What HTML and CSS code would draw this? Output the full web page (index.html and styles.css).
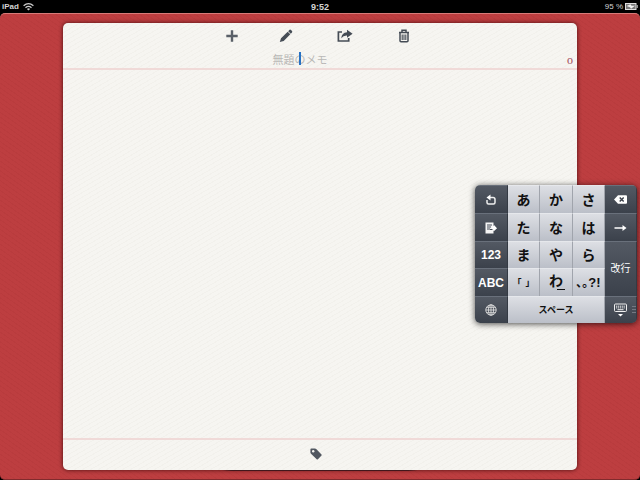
FILE: index.html
```html
<!DOCTYPE html>
<html lang="ja">
<head>
<meta charset="utf-8">
<meta name="viewport" content="width=device-width, initial-scale=1">
<title>無題のメモ</title>
<link rel="stylesheet" href="styles.css">
</head>
<body>
<header class="status">
  <div class="status-left">
    <span>iPad</span>
    <svg width="11" height="8" viewBox="0 0 11 8" fill="none" stroke="#ccc" stroke-width="1.3" aria-hidden="true"><path d="M.6 2.8Q5.5-1.4 10.4 2.8M2.5 4.7Q5.500 2.100 8.500 4.700"/><path d="M3.900 5.900 5.500 7.600 7.100 5.900Q5.500 4.700 3.900 5.900Z" fill="#ccc" stroke="none"/></svg>
  </div>
  <time>9:52</time>
  <div class="status-right">
    <span class="percent">95 %</span>
    <svg width="13" height="7" viewBox="0 0 13 7" aria-hidden="true"><rect x=".5" y=".5" width="10.500" height="6" fill="#777" stroke="#ddd"/><path d="M11.700 2h1v3h-1z" fill="#ccc"/><path d="M1.500 3 5.500 1.200 6.500 2.700H10L6 5.800 5 4.200z" fill="#eee"/></svg>
  </div>
</header>
<main class="desk">
  <article class="paper">
    <nav class="tools" aria-label="メモ">
      <button class="tool tool-first" aria-label="追加"><svg width="12" height="12" viewBox="0 0 12 12"><path d="M6 .3v11.400M.3 6h11.400" stroke="#5a6068" stroke-width="2.400"/></svg></button>
      <button class="tool" aria-label="編集"><svg width="14" height="14" viewBox="0 0 14 14" fill="#454c55"><path d="M.8 13 2 9.200 8.700 2.700 11.300 5.300 4.700 11.900ZM9.200 2.200 10.600.8Q11.300.4 12 .9L13 1.900Q13.600 2.600 13 3.400L11.800 4.800Z"/></svg></button>
      <button class="tool tool-wide" aria-label="共有"><svg width="16" height="14" viewBox="0 0 16 14"><path d="M5 3H1.400V12H11.700V9" fill="none" stroke="#454c55" stroke-width="1.700"/><path d="M10 .8 15.600 4.700 10 8.700V6.500Q6.300 6.300 4.200 9.200 4.800 3.700 10 3.200Z" fill="#454c55"/></svg></button>
      <button class="tool" aria-label="削除"><svg width="12" height="14" viewBox="0 0 12 14" fill="none" stroke="#454c55"><path d="M1 3.500h10M4 3V1.200h4V3" stroke-width="1.500"/><path d="M2 4V11.800Q2 12.800 3 12.800H9Q10 12.800 10 11.800V4" stroke-width="1.500"/><path d="M4.200 5.500V11M6 5.500V11M7.800 5.500V11" stroke-width="1.100"/></svg></button>
    </nav>
    <div class="title-row">
      <div class="title-field">
        <input class="title" type="text" aria-label="タイトル" placeholder="無題のメモ">
        <span class="caret"></span>
      </div>
      <span class="count">o</span>
    </div>
    <textarea class="note" aria-label="本文"></textarea>
    <footer class="tags">
      <button class="tag" aria-label="タグ"><svg width="12" height="12" viewBox="0 0 12 12"><path d="M.4 1.400Q.4.400 1.400.400L5 .5Q5.700.5 6.200 1L11.500 6.500Q12 7.100 11.500 7.600L7.900 11.300Q7.300 11.800 6.700 11.300L1 5.700Q.4 5.200.4 4.600Z" fill="#515760"/><circle cx="3.200" cy="3.200" r="1.200" fill="#f5f4f0"/></svg></button>
    </footer>
  </article>
</main>
<section class="keyboard" aria-label="キーボード">
  <button class="key dark" aria-label="戻す"><svg width="12" height="12" viewBox="0 0 12 12"><path d="M2 6V8.500Q2 10 3.500 10H8.500Q10 10 10 8.500V5.500Q10 3.500 8 3.500H5" fill="none" stroke="#eee" stroke-width="1.500"/><path d="M5.500.5V6.500L1.500 3.500Z" fill="#fff"/></svg></button>
  <button class="key">あ</button>
  <button class="key">か</button>
  <button class="key">さ</button>
  <button class="key dark" aria-label="削除"><svg width="13" height="9" viewBox="0 0 13 9"><path d="M0 4.500 4 .3H12Q13 .3 13 1.300V7.700Q13 8.700 12 8.700H4Z" fill="#fff"/><path d="m5.700 2.500 4 4m0-4-4 4" stroke="#3b414b" stroke-width="1.500"/></svg></button>
  <button class="key dark" aria-label="次候補"><svg width="12" height="12" viewBox="0 0 12 12"><path d="M.5.500h8v3l3 2.700L8.500 9v2.500h-8z" fill="#f5f5f5"/><path d="M2 3h5M2 5h4M2 7h3M5 7.500h3" stroke="#434954"/><path d="M7 4.500h2V3l3 3.200L9 9V7.500H7z" fill="#fff"/></svg></button>
  <button class="key">た</button>
  <button class="key">な</button>
  <button class="key">は</button>
  <button class="key dark" aria-label="次へ"><svg width="13" height="8" viewBox="0 0 13 8"><path d="M.5 4H10" stroke="#fff" stroke-width="1.500"/><path d="M8.500 1 12.500 4 8.500 7Z" fill="#fff"/></svg></button>
  <button class="key dark latin">123</button>
  <button class="key">ま</button>
  <button class="key">や</button>
  <button class="key">ら</button>
  <button class="key dark enter">改行</button>
  <button class="key dark latin">ABC</button>
  <button class="key brackets"><span>「</span><span>」</span></button>
  <button class="key wa">わ<span class="bar"></span></button>
  <button class="key marks"><span class="dots">､｡</span>?!</button>
  <button class="key dark" aria-label="言語"><svg width="12" height="12" viewBox="0 0 12 12" fill="none" stroke="#ddd" stroke-width=".9"><circle cx="6" cy="6" r="5.200"/><ellipse cx="6" cy="6" rx="2.500" ry="5.200"/><path d="M6 .8V11.200M.8 6H11.200M1.700 3.300H10.300M1.700 8.700H10.300"/></svg></button>
  <button class="key space">スペース</button>
  <button class="key dark" aria-label="閉じる"><svg width="13" height="14" viewBox="0 0 13 14"><rect x=".5" y="1" width="12" height="7.500" rx="1" fill="none" stroke="#eee"/><path d="M2 3.200h9M2 4.900h9" stroke="#eee" stroke-dasharray="1.200 .7"/><path d="M3.500 6.700h6" stroke="#eee"/><path d="M4 11h5L6.500 13.500Z" fill="#fff"/></svg><span class="grip"></span></button>
</section>
</body>
</html>
```
FILE: styles.css
```css
* {
  box-sizing: border-box;
}

body {
  margin: 0;
  min-height: 100vh;
  display: flex;
  flex-direction: column;
  background: #000;
  font-family: "Liberation Sans", "Noto Sans CJK JP", sans-serif;
}

button,
input,
textarea {
  margin: 0;
  padding: 0;
  border: 0;
  background: none;
  font: inherit;
  outline: 0;
}

svg {
  display: block;
}

.status {
  display: grid;
  grid-template-columns: 1fr auto 1fr;
  align-items: center;
  height: 13px;
  padding: 0 2px;
  color: #d4d4d4;
  font-size: 8px;
  font-weight: bold;
  line-height: 12px;
}

.status time {
  font-size: 9px;
}

.status-left,
.status-right {
  display: flex;
  align-items: center;
  gap: 4px;
}

.status-right {
  justify-content: flex-end;
  gap: 2px;
}

.percent {
  font-weight: normal;
}

.desk {
  flex: 1;
  display: flex;
  padding: 9px 63px;
  border-top: 1px solid #d77b78;
  border-bottom: 1px solid #802b2d;
  border-radius: 5px;
  background:
    repeating-linear-gradient(35deg, rgba(120, 20, 20, 0.06) 0 1px, transparent 1px 4px),
    #bd3e40;
}

.paper {
  position: relative;
  flex: 1;
  display: flex;
  flex-direction: column;
  min-width: 0;
  border-radius: 5px;
  background:
    repeating-linear-gradient(150deg, rgba(120, 110, 80, 0.03) 0 1px, transparent 1px 4px),
    #f6f5f1;
  box-shadow: 0 0 4px rgba(40, 0, 0, 0.8);
}

.paper::after {
  content: "";
  position: absolute;
  top: 100%;
  left: 31%;
  right: 31%;
  height: 1px;
  background: linear-gradient(90deg, transparent, #42171c 5% 95%, transparent);
}

.tools {
  display: flex;
  justify-content: center;
  height: 26px;
}

.tool {
  display: flex;
  align-items: center;
  justify-content: center;
  width: 58px;
}

.tool-first {
  width: 50px;
}

.tool-wide {
  width: 60px;
}

.title-row {
  display: flex;
  height: 21px;
  border-bottom: 2px solid #f0dad8;
}

.title-field {
  position: relative;
  flex: 1;
}

.title {
  width: 100%;
  height: 22px;
  text-align: center;
  font-size: 11px;
  line-height: 22px;
}

.title::placeholder {
  color: #b9b8b6;
  opacity: 1;
}

.caret {
  position: absolute;
  top: 3px;
  left: 50%;
  width: 2px;
  height: 13px;
  margin-left: -1px;
  background: #2772c4;
}

.count {
  width: 40px;
  padding-right: 4px;
  color: #a34a57;
  font-family: "Liberation Serif", serif;
  font-size: 12px;
  line-height: 22px;
  text-align: right;
}

.note {
  flex: 1;
  width: 100%;
  resize: none;
}

.tags {
  display: flex;
  align-items: center;
  justify-content: center;
  height: 32px;
  padding-right: 8px;
  padding-bottom: 2px;
  border-top: 2px solid #f0dad8;
}

.keyboard {
  position: absolute;
  top: 185px;
  right: 3px;
  display: grid;
  grid-template-columns: 33px 32px 33px 32px 32px;
  grid-template-rows: 28px 28px 27px 28px 27px;
  border-radius: 5px;
  overflow: hidden;
  box-shadow: 0 1px 6px rgba(0, 0, 0, 0.7);
}

.key {
  position: relative;
  display: flex;
  align-items: center;
  justify-content: center;
  border-top: 1px solid #e6e8ec;
  border-right: 1px solid #a0a4ac;
  background: linear-gradient(#dddfe4, #bbbfc8);
  color: #111;
  font-size: 14px;
  font-weight: bold;
  line-height: 20px;
  white-space: nowrap;
}

.dark {
  border-top-color: #69707b;
  border-right-color: #343a43;
  background: linear-gradient(#535963, #3b414b);
  color: #fff;
}

.latin {
  font-size: 12px;
}

.enter {
  grid-row: span 2;
  font-size: 10px;
  font-weight: normal;
}

.brackets {
  gap: 4px;
  font-size: 9px;
}

.wa {
  padding-bottom: 4px;
}

.marks {
  font-size: 13px;
}

.dots {
  font-size: 12px;
}

.space {
  grid-column: span 3;
  font-size: 9px;
}

.bar {
  position: absolute;
  right: 7px;
  bottom: 6px;
  width: 8px;
  height: 1px;
  background: #111;
}

.grip {
  position: absolute;
  right: 0;
  top: 9px;
  width: 4px;
  height: 7px;
  background: repeating-linear-gradient(#737983 0 1px, transparent 1px 3px);
}
```
